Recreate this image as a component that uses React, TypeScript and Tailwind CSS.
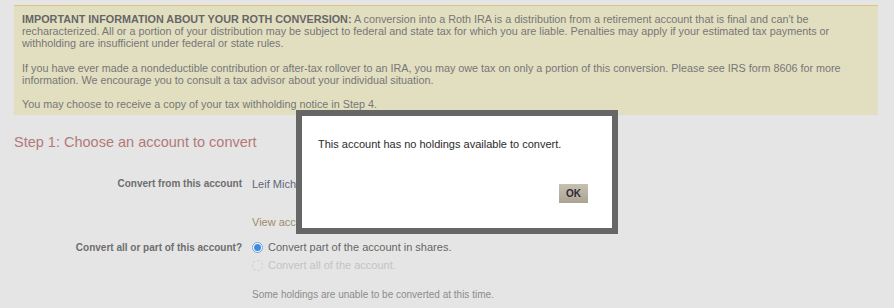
import React from "react";

export default function App() {
  return (
    <div
      className="relative w-[894px] h-[308px] overflow-hidden bg-[#e5e5e5]"
      style={{ fontFamily: '"Liberation Sans", Arial, sans-serif' }}
    >
      <div className="pt-[5px] px-[14px]">
        <div className="w-[864px] border-t border-[#dfc27b] bg-[#e2dfc1] px-[8px] pt-[7px] pb-[4px] text-[10.8px] leading-[12.2px] text-[#767676]">
          <p>
            <span className="font-bold text-[#666]">IMPORTANT INFORMATION ABOUT YOUR ROTH CONVERSION:</span>{" "}
            A conversion into a Roth IRA is a distribution from a retirement account that is final and can't be
            recharacterized. All or a portion of your distribution may be subject to federal and state tax for which you
            are liable. Penalties may apply if your estimated tax payments or withholding are insufficient under federal
            or state rules.
          </p>
          <p className="mt-[12.2px]">
            If you have ever made a nondeductible contribution or after-tax rollover to an IRA, you may owe tax on only
            a portion of this conversion. Please see IRS form 8606 for more information. We encourage you to consult a
            tax advisor about your individual situation.
          </p>
          <p className="mt-[12.2px]">You may choose to receive a copy of your tax withholding notice in Step 4.</p>
        </div>

        <h2 className="mt-[17px] text-[14.5px] leading-[20px] text-[#b3797a]">Step 1: Choose an account to convert</h2>

        <div className="mt-[25px] grid grid-cols-[228px_1fr] gap-x-[10px]">
          <div className="text-right text-[10px] font-bold text-[#6e6e6e] leading-[14px]">Convert from this account</div>
          <div className="text-[11px] leading-[14px] text-[#5f6578]">Leif Michaels Roth IRA</div>

          <div />
          <div className="mt-[24px] text-[11px] leading-[14px] text-[#a08b6d]">View account details</div>

          <div className="mt-[12px] text-right text-[10px] font-bold text-[#6e6e6e] leading-[14px]">
            Convert all or part of this account?
          </div>
          <div className="mt-[12px] flex flex-col">
            <div className="flex items-center gap-[5px] h-[14px]">
              <span className="flex h-[11px] w-[11px] items-center justify-center rounded-full border border-[#6fa3d9] bg-white">
                <span className="h-[7px] w-[7px] rounded-full bg-[#3f8be0]" />
              </span>
              <span className="text-[11px] text-[#666]">Convert part of the account in shares.</span>
            </div>
            <div className="mt-[4px] flex items-center gap-[5px] h-[14px]">
              <span className="h-[11px] w-[11px] rounded-full border border-dashed border-[#d0d0d0]" />
              <span className="text-[11px] text-[#c3c3c3]">Convert all of the account.</span>
            </div>
            <div className="mt-[15px] text-[10px] leading-[13px] text-[#8c8c8c]">
              Some holdings are unable to be converted at this time.
            </div>
          </div>
        </div>
      </div>

      <div className="absolute left-[296px] top-[110px] w-[322px] h-[124px] border-[6px] border-[#666666] bg-white">
        <div className="pl-[16px] pt-[21px] text-[11px] leading-[14px] text-[#2b2b2b]">
          This account has no holdings available to convert.
        </div>
        <div className="absolute right-[24px] top-[64px]">
          <button className="h-[19px] w-[29px] bg-gradient-to-b from-[#c7bfb0] to-[#aca493] text-[10px] font-bold text-[#2d2a3a]">
            OK
          </button>
        </div>
      </div>
    </div>
  );
}
